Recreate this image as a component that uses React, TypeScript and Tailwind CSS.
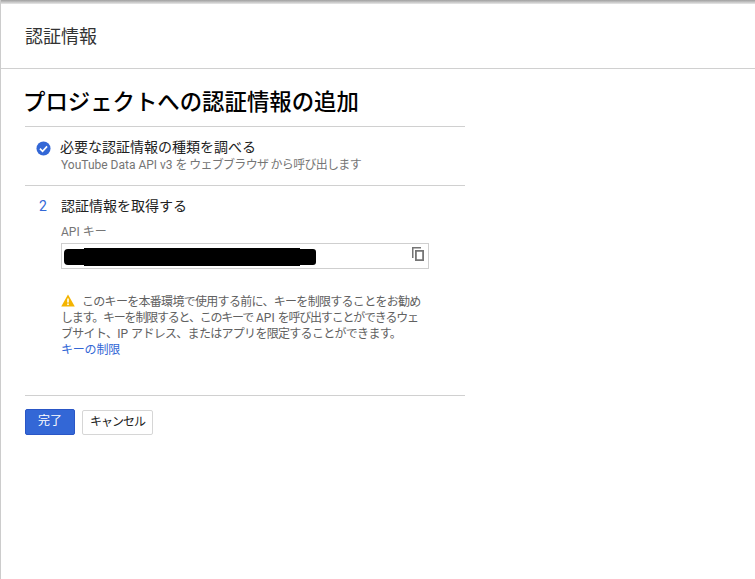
import React from "react";

const font = { fontFamily: '"Roboto", "Noto Sans CJK JP", sans-serif' };

function CheckCircle() {
  return (
    <svg width={15} height={15} viewBox="0 0 16 16" className="shrink-0">
      <circle cx="8" cy="8" r="7.5" fill="#3367d6" />
      <polyline points="4.2,8.2 7,11 11.8,5.8" fill="none" stroke="#fff" strokeWidth="1.8" />
    </svg>
  );
}

function CopyIcon() {
  return (
    <svg width={14} height={15} viewBox="0 0 14 15" className="text-[#757575]">
      <path d="M1 0h9v1.5H2.5V11H1z" fill="currentColor" />
      <path d="M4 3h9v11H4zM5.8 4.8v7.4h5.4V4.8z" fill="currentColor" fillRule="evenodd" />
    </svg>
  );
}

function WarnIcon() {
  return (
    <svg width={14} height={13} viewBox="0 0 14 13" className="shrink-0">
      <path d="M7 0.5 L13.8 12.5 H0.2 Z" fill="#f4b400" />
      <rect x="6.2" y="4.5" width="1.6" height="4" fill="#fff" />
      <rect x="6.2" y="9.5" width="1.6" height="1.6" fill="#fff" />
    </svg>
  );
}

// hand drawn redaction over the key
function Redaction() {
  return (
    <svg width={252} height={19} viewBox="0 0 252 19" className="shrink-0 mt-[1px]">
      <path
        d="M4 1H20V0H236V1H249Q252 1 252 4V14Q252 17 249 17H236V18H20V17H4Q0 17 0 13V5Q0 1 4 1Z"
        fill="#000"
      />
    </svg>
  );
}

export default function App() {
  return (
    <div style={font} className="relative w-[755px] h-[579px] bg-white overflow-hidden border-l border-[#cccccc] text-[#212121]">
      <div className="h-[4px] -ml-[1px] bg-gradient-to-b from-[#a0a0a0] to-[#e8e8e8]" />
      <header className="h-[65px] border-b border-[#d0d0d0] pl-[24px] flex items-center text-[18px] text-[#333333] pt-[1px]">
        認証情報
      </header>

      <main className="w-[464px] pl-[24px]">
        <h1 className="text-[22.4px] leading-[30px] mt-[18px] -ml-[2px] font-medium text-black">プロジェクトへの認証情報の追加</h1>

        <div className="mt-[9px] border-t border-[#d0d0d0] h-[59px] pl-[11px] pt-[12px] flex gap-[10px]">
          <div className="pt-[2px]"><CheckCircle /></div>
          <div>
            <div className="text-[14px] leading-[17px] -ml-[1px]">必要な認証情報の種類を調べる</div>
            <div className="text-[12px] leading-[16px] text-[#757575] mt-[1px]">YouTube Data API v3 <span className="tracking-[-0.7px]">を ウェブブラウザ から呼び出します</span></div>
          </div>
        </div>

        <section className="border-t border-[#d0d0d0] pt-[12px] pl-[14px] flex gap-[13px]">
          <div className="text-[14px] leading-[17px] text-[#3367d6] w-[9px]">2</div>
          <div className="w-[368px]">
            <div className="text-[14px] leading-[17px]">認証情報を取得する</div>
            <div className="text-[12px] leading-[16px] text-[#757575] mt-[9px]">API キー</div>
            <div className="mt-[3px] h-[26px] border border-[#cfcfcf] flex items-start justify-between pl-[2px] pr-[3px] pt-[3px]">
              <Redaction />
              <CopyIcon />
            </div>
            <p className="mt-[25px] text-[12px] leading-[16px] text-[#616161] tracking-[-0.7px] whitespace-nowrap">
              <span className="inline-block align-[-1px] mr-[7px]"><WarnIcon /></span>
              このキーを本番環境で使用する前に、キーを制限することをお勧め<br />
              <span className="tracking-[-1.2px]">します。キーを制限すると、このキーで<span className="tracking-normal"> API </span>を呼び出すことができるウェ</span><br />
              ブサイト、<span className="tracking-normal">IP </span>アドレス、またはアプリを限定することができます。
            </p>
            <a className="block text-[12px] leading-[16px] text-[#3367d6] tracking-[-0.2px]">キーの制限</a>
          </div>
        </section>

        <div className="mt-[37px] border-t border-[#d0d0d0] pt-[13px] flex gap-[7px]">
          <button className="w-[50px] h-[26px] pb-[2px] bg-[#3367d6] border border-[#2a56c6] rounded-[2px] text-white text-[12px]">完了</button>
          <button className="w-[71px] h-[25px] mt-[1px] pb-[2px] bg-white border border-[#d6d6d6] rounded-[2px] text-[#212121] text-[12px] tracking-[-1px]">キャンセル</button>
        </div>
      </main>
    </div>
  );
}
